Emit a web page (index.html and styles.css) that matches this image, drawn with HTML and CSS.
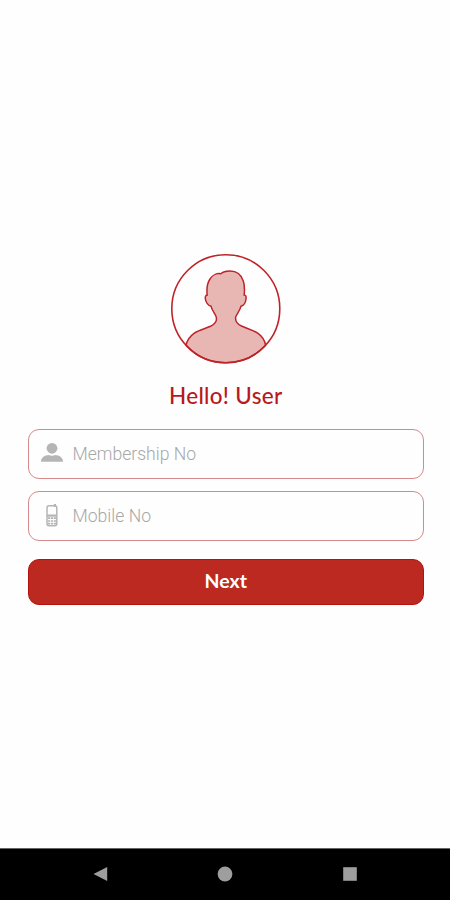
FILE: index.html
```html
<!DOCTYPE html>
<html lang="en">
<head>
    <meta charset="UTF-8">
    <meta name="viewport" content="width=device-width, initial-scale=1.0">
    <title>Login</title>
    <link rel="stylesheet" href="styles.css">
</head>
<body>

    <main class="login">
        <svg class="avatar" viewBox="0 0 110 110">
            <path class="avatar-body" d="M15 91.3 C16 86.5 18.5 82.5 23 79.3 C28 76 34 74.8 39.5 72.3 C44 70 46.5 67.5 45.2 63 C44.5 60 41 57 40 52.2 C37 51.5 34.5 48 34.3 44.3 C34.2 42 35 41 36.2 41 C35.5 35 36 29.5 39 25 C41.5 21 46 19 49.8 19.8 C52 17.5 55 17 59 17 C66 17 70.5 21.5 72.3 27 C73.6 31 73.7 36 73.2 41 C75 41 75.3 42.5 75 45 C74.6 48.5 72.7 51.5 70 52.2 C69 57 65.5 60 64.7 63 C63.8 67.5 66 70 71 72.3 C76.5 74.8 82.5 76.2 87 79.3 C91.3 82.3 93.8 86 94.6 91.3 A54 54 0 0 1 15 91.3 Z"/>
            <circle class="avatar-ring" cx="54.8" cy="54.7" r="54"/>
        </svg>

        <h1 class="greeting">Hello! User</h1>

        <form class="login-form">
            <label class="field">
                <svg class="field-icon" viewBox="0 0 24 24">
                    <circle cx="12" cy="6.3" r="5.4"/>
                    <path d="M1 19.7 C1 15.5 5 13.4 8.5 13.1 Q12 14.2 15.5 13.1 C19 13.4 23 15.5 23 19.7 Z"/>
                </svg>
                <input type="text" placeholder="Membership No">
            </label>

            <label class="field field-mobile">
                <svg class="field-icon" viewBox="0 0 24 24">
                    <rect class="phone-case" x="7" y="1.8" width="9.8" height="20" rx="2"/>
                    <path d="M13.8 0 h2.2 v3 h-2.2 Z"/>
                    <path d="M7 10.5 h9.8 v2.2 h-9.8 Z"/>
                    <path class="phone-keys" d="M8 14.2 h2.2 M10.9 14.2 h2.2 M13.8 14.2 h2.2 M8 17 h2.2 M10.9 17 h2.2 M13.8 17 h2.2 M8 19.7 h2.2 M10.9 19.7 h2.2 M13.8 19.7 h2.2"/>
                </svg>
                <input type="tel" placeholder="Mobile No">
            </label>

            <button class="next-btn" type="button">Next</button>
        </form>
    </main>

    <nav class="nav-bar">
        <svg class="nav-icon" viewBox="0 0 16 16"><path d="M1.5 8 L15.2 1 V15 Z"/></svg>
        <svg class="nav-icon" viewBox="0 0 16 16"><circle cx="8" cy="8" r="7.4"/></svg>
        <svg class="nav-icon" viewBox="0 0 16 16"><path d="M1.2 1.2 H14.8 V14.8 H1.2 Z"/></svg>
    </nav>

</body>
</html>
```
FILE: styles.css
```css
* { margin: 0; padding: 0; box-sizing: border-box; }

body {
    height: 100vh;
    display: flex;
    flex-direction: column;
    overflow: hidden;
    background: #fefefe;
    font-family: Roboto, sans-serif;
}

/* --- LOGIN SCREEN --- */
.login {
    flex: 1;
    display: flex;
    flex-direction: column;
    align-items: center;
    padding: 254px 26px 0 27.5px;
}

.avatar {
    width: 110px;
    height: 110px;
    overflow: visible;
}

.avatar-body { fill: #e8b6b3; stroke: #bd2429; stroke-width: 1.5; }
.avatar-ring { fill: none; stroke: #bd2429; stroke-width: 1.6; }

.greeting {
    height: 30px;
    margin: 17px 0 18px;
    line-height: 30px;
    font-family: Lato, sans-serif;
    font-size: 22.5px;
    font-weight: 500;
    letter-spacing: 0.3px;
    color: #b9181d;
}

.login-form { width: 100%; }

.field {
    display: flex;
    align-items: center;
    height: 49.5px;
    margin-bottom: 12.5px;
    padding-left: 11px;
    border: 1.5px solid #d48a8a;
    border-radius: 11px;
}

.field-icon {
    width: 24px;
    height: 24px;
    margin-right: 9px;
    fill: #b5b5b5;
}

.phone-case { fill: none; stroke: #b5b5b5; stroke-width: 1.5; }
.phone-keys { stroke: #b5b5b5; stroke-width: 1.7; }

.field input {
    flex: 1;
    border: none;
    outline: none;
    background: none;
    font-family: Roboto, sans-serif;
    font-size: 17.6px;
    font-weight: 300;
}

.field input::placeholder { color: #a8a8a8; }

.field-mobile { margin-bottom: 18px; }
.field-mobile input { padding-top: 1px; }

.next-btn {
    width: 100%;
    height: 46px;
    padding-bottom: 3px;
    border: 1.5px solid #b3120f;
    border-radius: 11px;
    background: #bc2920;
    color: #fff;
    font-family: Lato, sans-serif;
    font-size: 19.5px;
    font-weight: 700;
}

/* --- SYSTEM NAVIGATION BAR --- */
.nav-bar {
    display: flex;
    justify-content: center;
    align-items: center;
    gap: 109px;
    height: 52px;
    padding-bottom: 2px;
    border-top: 1px solid #666;
    background: #000;
}

.nav-icon { width: 16px; height: 16px; fill: #9e9e9e; }
```
